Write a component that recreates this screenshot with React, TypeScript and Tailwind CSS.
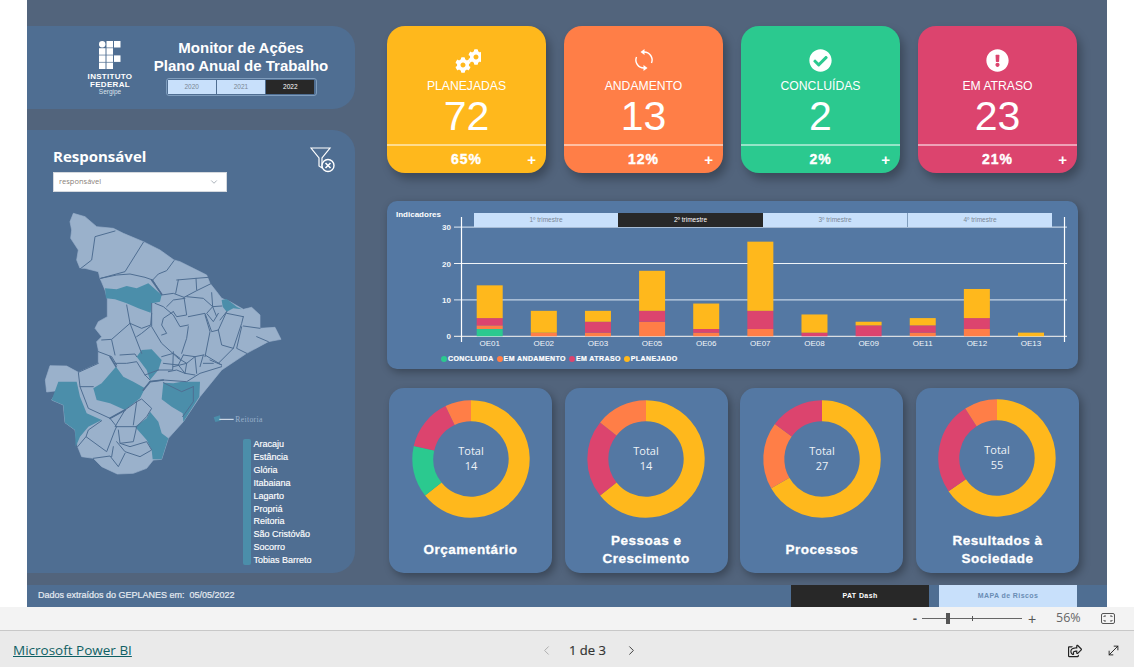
import React from "react";
import { FaCheckCircle, FaCog, FaExclamationCircle, FaRegShareSquare } from "react-icons/fa";
import { ChevronDown, ChevronLeft, ChevronRight, MoveDiagonal } from "lucide-react";

const YELLOW = "#ffb81c";
const ORANGE = "#ff7e47";
const GREEN = "#2bc98f";
const RED = "#dc446e";

const GearsIcon = () => (
  <svg width="28" height="28" viewBox="0 0 28 28" fill="white">
    <FaCog x="2" y="11" width="14" height="14" />
    <FaCog x="15" y="3" width="11" height="11" />
  </svg>
);

const SyncIcon = () => (
  <svg width="24" height="24" viewBox="0 0 24 24" fill="white">
    <path d="M12 4 A8 8 0 0 1 19.5 15" fill="none" stroke="white" strokeWidth="1.4" />
    <path d="M12.5 1 L8.5 4 L12.5 7 Z" />
    <path d="M12 20 A8 8 0 0 1 4.5 9" fill="none" stroke="white" strokeWidth="1.4" />
    <path d="M11.5 17 L15.5 20 L11.5 23 Z" />
  </svg>
);

const kpis = [
  { title: "PLANEJADAS", value: "72", pct: "65%", bg: "bg-[#ffb81c]", icon: <GearsIcon /> },
  { title: "ANDAMENTO", value: "13", pct: "12%", bg: "bg-[#ff7e47]", icon: <SyncIcon /> },
  { title: "CONCLUÍDAS", value: "2", pct: "2%", bg: "bg-[#2bc98f]", icon: <FaCheckCircle size={23} color="white" /> },
  { title: "EM ATRASO", value: "23", pct: "21%", bg: "bg-[#dc446e]", icon: <FaExclamationCircle size={23} color="white" /> },
];

const KpiCard = ({ title, value, pct, bg, icon }: (typeof kpis)[number]) => (
  <div className={`${bg} w-[159px] h-[147px] rounded-[18px] shadow-[4px_6px_10px_rgba(0,0,0,0.28)] flex flex-col items-center text-white`}>
    <div className="h-[28px] mt-[20px] flex items-center justify-center">{icon}</div>
    <div className="text-[12.2px] leading-[15px] mt-[5px]">{title}</div>
    <div className="text-[41px] leading-[42px] mt-[1px]">{value}</div>
    <div className="w-full h-[1.5px] bg-white/50 mt-[7px]" />
    <div className="w-full flex-1 flex items-center justify-center relative">
      <span className="text-[14px] font-bold tracking-[1px] [-webkit-text-stroke:0.4px_white]">{pct}</span>
      <span className="absolute right-[10px] top-[3px] text-[15px] font-bold">+</span>
    </div>
  </div>
);

const bars = [
  { label: "OE01", c: 2, a: 1, e: 2, p: 9 },
  { label: "OE02", c: 0, a: 1, e: 0, p: 6 },
  { label: "OE03", c: 0, a: 1, e: 3, p: 3 },
  { label: "OE05", c: 0, a: 4, e: 3, p: 11 },
  { label: "OE06", c: 0, a: 1, e: 1, p: 7 },
  { label: "OE07", c: 0, a: 2, e: 5, p: 19 },
  { label: "OE08", c: 0, a: 0, e: 1, p: 5 },
  { label: "OE09", c: 0, a: 0, e: 3, p: 1 },
  { label: "OE11", c: 0, a: 1, e: 2, p: 2 },
  { label: "OE12", c: 0, a: 2, e: 3, p: 8 },
  { label: "OE13", c: 0, a: 0, e: 0, p: 1 },
];

// svg starts at x=387, y=215 of the page
const BarChart = () => {
  const y0 = 121.3;
  const unit = 3.64;
  return (
    <svg width="691" height="132" viewBox="0 0 691 132" className="block relative -mt-[12px]" fontFamily="Liberation Sans, sans-serif">
      {[0, 10, 20, 30].map((v) => (
        <g key={v}>
          <line x1="67" x2="680" y1={y0 - v * unit} y2={y0 - v * unit} stroke={v === 20 ? "#f0f4f8" : v === 0 ? "#d9dde2" : "#c3d3e6"} strokeWidth="1.2" />
          <text x="64" y={y0 - v * unit + 3} textAnchor="end" fontSize="8" fontWeight="700" fill="#f2f5f9">{v}</text>
        </g>
      ))}
      <line x1="74.5" x2="74.5" y1="2" y2="127" stroke="white" strokeWidth="1.2" />
      <line x1="677.5" x2="677.5" y1="2" y2="127" stroke="white" strokeWidth="1.2" />
      {bars.map((b, i) => {
        const x = 89.7 + i * 54.13;
        let acc = 0;
        const segs = [
          { v: b.c, f: GREEN },
          { v: b.a, f: ORANGE },
          { v: b.e, f: RED },
          { v: b.p, f: YELLOW },
        ];
        return (
          <g key={b.label}>
            {segs.map((s, j) => {
              const h = s.v * unit;
              acc += h;
              return s.v ? <rect key={j} x={x} y={y0 - acc} width="26" height={h} fill={s.f} /> : null;
            })}
            <text x={x + 13} y="131" textAnchor="middle" fontSize="8" fill="#f2f5f9">{b.label}</text>
          </g>
        );
      })}
    </svg>
  );
};

const legend = [
  { label: "CONCLUIDA", cls: "bg-[#2bc98f]" },
  { label: "EM ANDAMENTO", cls: "bg-[#ff7e47]" },
  { label: "EM ATRASO", cls: "bg-[#dc446e]" },
  { label: "PLANEJADO", cls: "bg-[#ffb81c]" },
];

const Donut = ({ segs, total }: { segs: { v: number; f: string }[]; total: number }) => {
  const r = 48.2;
  const cx = 60;
  const cy = 60;
  const sum = segs.reduce((s, x) => s + x.v, 0);
  let a = 0;
  return (
    <svg width="120" height="120" viewBox="0 0 120 120" className="block">
      {segs.map((s, i) => {
        const a0 = (a / sum) * 2 * Math.PI;
        a += s.v;
        const a1 = (a / sum) * 2 * Math.PI;
        const d = `M${cx + r * Math.sin(a0)} ${cy - r * Math.cos(a0)} A${r} ${r} 0 ${a1 - a0 > Math.PI ? 1 : 0} 1 ${cx + r * Math.sin(a1)} ${cy - r * Math.cos(a1)}`;
        return <path key={i} d={d} fill="none" stroke={s.f} strokeWidth="21" />;
      })}
      <text x="60" y="56" textAnchor="middle" fontSize="11" fill="#eef2f7" fontFamily="Open Sans, sans-serif">Total</text>
      <text x="60" y="71" textAnchor="middle" fontSize="11" fill="#eef2f7" fontFamily="Open Sans, sans-serif">{total}</text>
    </svg>
  );
};

const donuts = [
  { title: ["Orçamentário"], total: 14, top: "pt-[11px]", segs: [{ v: 9, f: YELLOW }, { v: 2, f: GREEN }, { v: 2, f: RED }, { v: 1, f: ORANGE }] },
  { title: ["Pessoas e", "Crescimento"], total: 14, top: "pt-[11px]", segs: [{ v: 9, f: YELLOW }, { v: 3, f: RED }, { v: 2, f: ORANGE }] },
  { title: ["Processos"], total: 27, top: "pt-[11px]", segs: [{ v: 18, f: YELLOW }, { v: 5, f: ORANGE }, { v: 4, f: RED }] },
  { title: ["Resultados à", "Sociedade"], total: 55, top: "pt-[10px]", segs: [{ v: 36, f: YELLOW }, { v: 14, f: RED }, { v: 5, f: ORANGE }] },
];

const cities = ["Aracaju", "Estância", "Glória", "Itabaiana", "Lagarto", "Propriá", "Reitoria", "São Cristóvão", "Socorro", "Tobias Barreto"];

const outline =
  "130,40 165,50 200,80 250,85 280,100 340,125 390,150 432,180 450,185 490,205 530,225 540,250 560,275 575,295 600,305 640,328 665,322 690,345 690,385 735,382 753,418 715,425 650,460 575,510 510,590 460,665 415,715 395,778 370,780 350,805 310,820 262,822 215,800 190,775 155,770 143,740 135,690 105,668 100,615 65,600 82,572 50,576 46,540 60,497 110,498 145,517 205,490 205,450 200,425 215,410 195,385 205,365 232,350 232,297 225,270 210,235 205,215 165,205 150,205 140,180 145,150 122,115 125,90 120,65";

const tealAreas = [
  "225,265 260,268 290,258 320,265 355,250 395,285 390,305 365,310 362,338 325,325 290,310 255,298 228,295",
  "575,300 590,297 620,320 635,328 610,325 590,335 578,320",
  "335,450 365,448 395,480 385,510 360,540 350,510 320,470",
  "258,500 280,530 310,545 345,565 330,595 285,630 240,610 200,600 190,565 215,550",
  "85,545 140,545 150,590 170,640 215,660 175,680 150,710 137,740 135,690 105,668 100,615 65,600",
  "400,548 430,550 455,545 510,545 508,590 460,665 458,640 425,620 395,598",
  "360,635 385,665 395,700 415,715 395,778 368,778 365,750 350,720 315,680 350,655",
];

const borders = [
  "255,93 195,110 185,180 150,207",
  "340,127 285,215 212,235",
  "212,235 260,225 300,222 345,232 368,240 395,283",
  "368,240 385,222 410,212 432,182",
  "395,285 430,280 462,292 500,272 545,250",
  "440,240 498,235 535,232",
  "445,240 437,280",
  "498,235 500,270",
  "545,278 548,320 575,318",
  "462,292 470,345 440,350 430,335",
  "470,290 520,295 548,320 560,350",
  "290,315 300,370 245,418 215,420",
  "300,370 335,460",
  "300,370 335,385 362,375 365,340",
  "365,310 365,380 395,430 445,475",
  "362,378 335,400 320,410",
  "395,405 410,400 395,375 400,355 430,335",
  "375,310 400,320 430,345 450,380 475,375",
  "475,350 525,340 545,395 565,390 590,335",
  "475,380 470,415 455,460",
  "525,345 540,395 525,470",
  "565,390 575,435 610,445 635,370 640,350",
  "590,340 640,350",
  "640,378 690,385",
  "635,380 620,445 650,460",
  "680,410 715,425",
  "610,445 565,490",
  "525,465 575,495",
  "245,420 255,465",
  "205,455 245,470 260,495",
  "270,465 315,462 320,470",
  "255,490 290,490 320,485 345,525 360,540",
  "205,490 145,517 150,560 190,560",
  "395,470 430,460 450,475",
  "400,490 445,495 460,465",
  "430,455 428,510 385,510",
  "470,490 465,520",
  "495,470 500,520",
  "520,465 510,500",
  "360,545 400,540 470,545 510,520 575,500",
  "415,515 440,510 465,520 495,525",
  "340,570 360,545",
  "150,560 175,625 240,655 285,630",
  "260,680 240,655",
  "285,630 255,680 320,680 350,650 365,625 335,597 320,605 310,675",
  "320,605 285,630",
  "215,662 175,690 168,710 230,755 255,690 260,680",
  "168,710 143,740",
  "265,690 270,730 310,725 320,680",
  "260,725 285,755 330,770 365,750 350,725 300,740 270,730",
  "190,775 240,768 265,800 285,760",
  "250,740 245,770",
  "400,548 455,575 490,560",
  "490,560 490,605 458,650",
  "445,475 470,490 495,470 520,465",
  "430,500 470,490",
  "460,465 495,470",
  "465,520 445,495",
  "540,480 575,495",
  "520,490 550,490",
  "345,525 385,510",
  "410,320 430,300 465,295",
  "548,320 530,340 550,365 565,340",
  "590,335 570,360",
];

// the wider seams between the regions
const thickBorders = ["340,570 360,545 400,540", "240,655 285,630", "258,500 240,470", "365,240 395,283"];

const MapSergipe = () => (
  <svg width="330" height="370" viewBox="0 0 990 1110" className="block ml-[3px]">
    <polygon points={outline} fill="#9ab1cb" stroke="#9ab1cb" strokeWidth="2" strokeLinejoin="round" />
    {tealAreas.map((p) => (
      <polygon key={p} points={p} fill="#4b8eaa" />
    ))}
    {borders.map((p) => (
      <polyline key={p} points={p} fill="none" stroke="#4f6e92" strokeWidth="3" strokeLinejoin="round" strokeLinecap="round" />
    ))}
    {thickBorders.map((p) => (
      <polyline key={p} points={p} fill="none" stroke="#4f6e92" strokeWidth="5" strokeLinejoin="round" strokeLinecap="round" />
    ))}
    <polygon points="551,652 570,646 572,662 556,666" fill="#4b8eaa" />
    <line x1="568" x2="611" y1="658" y2="658" stroke="#e6edf5" strokeWidth="3" />
    <text x="616" y="667" fontSize="23" fill="#9ab1cb" letterSpacing="1" fontFamily="Liberation Serif, serif">Reitoria</text>
  </svg>
);

const IfLogo = () => (
  <svg width="22" height="28" viewBox="0 0 22 28" fill="white" className="block">
    <circle cx="3.2" cy="3.2" r="3.2" />
    <rect x="7.5" y="0" width="6.5" height="6.5" />
    <rect x="15" y="0" width="6.5" height="6.5" />
    <rect x="0" y="7.2" width="6.5" height="6.5" />
    <rect x="7.5" y="7.2" width="6.5" height="6.5" />
    <rect x="0" y="14.4" width="6.5" height="6.5" />
    <rect x="7.5" y="14.4" width="6.5" height="6.5" />
    <rect x="15" y="14.4" width="6.5" height="6.5" />
    <rect x="0" y="21.6" width="6.5" height="6.5" />
    <rect x="7.5" y="21.6" width="6.5" height="6.5" />
  </svg>
);

const ClearFilterIcon = () => (
  <svg width="26" height="28" viewBox="0 0 26 28" fill="none" stroke="white" strokeWidth="1.2">
    <path d="M1 2 H20 L12 12 V22 L9 20 V12 Z" />
    <circle cx="18" cy="19.5" r="6" fill="#4f6e92" strokeWidth="1.4" />
    <path d="M15.5 17 L20.5 22 M20.5 17 L15.5 22" strokeWidth="1.6" />
  </svg>
);

const FitIcon = () => (
  <svg width="14" height="11" viewBox="0 0 14 11" fill="none" stroke="#555" strokeWidth="1">
    <rect x="0.5" y="0.5" width="13" height="10" rx="1.5" />
    <path d="M3 4 V3 H5 M9 3 H11 V4 M11 7 V8 H9 M5 8 H3 V7" />
  </svg>
);

export default function App() {
  return (
    <div className="w-[1134px] h-[667px] overflow-hidden bg-white flex flex-col font-['Liberation_Sans',sans-serif]">
      <div className="h-[607px] flex">
        <div className="w-[27px] bg-white" />
        <main className="w-[1080px] bg-[#52647c] flex flex-col">
          <div className="h-[585px] flex pt-[26px]">
            {/* left column */}
            <div className="w-[328px] flex flex-col gap-[21px]">
              <div className="h-[83px] bg-[#4f6e92] rounded-r-[22px] flex">
                <div className="w-[118px] pt-[15px] flex flex-col items-center text-white pl-[48px]">
                  <IfLogo />
                  <div className="text-[8px] leading-[7.5px] font-bold tracking-[0.3px] text-center mt-[4px] whitespace-nowrap">INSTITUTO<br />FEDERAL</div>
                  <div className="text-[6.5px] leading-[8px] text-[#dbe3ec]">Sergipe</div>
                </div>
                <div className="flex-1 pt-[13px] flex flex-col items-center pr-[18px]">
                  <div className="text-white font-bold text-[15px] leading-[18px] text-center whitespace-nowrap">Monitor de Ações<br />Plano Anual de Trabalho</div>
                  <div className="mt-[3px] w-[151px] h-[18px] rounded-[3px] border border-[#7f9dbd] bg-[#4f6e92] flex items-stretch gap-px p-px text-[6.5px]">
                    <div className="flex-1 bg-[#c8e0fb] text-[#7a8794] flex items-center justify-center">2020</div>
                    <div className="flex-1 bg-[#c8e0fb] text-[#7a8794] flex items-center justify-center">2021</div>
                    <div className="flex-1 bg-[#282828] text-white flex items-center justify-center">2022</div>
                  </div>
                </div>
              </div>
              <div className="h-[443px] bg-[#4f6e92] rounded-r-[22px] flex flex-col">
                <div className="flex pl-[26px] pr-[19px] pt-[16px] justify-between items-start h-[70px]">
                  <div>
                    <div className="text-white font-bold text-[15px] leading-[20px] font-['Open_Sans',sans-serif]">Responsável</div>
                    <div className="mt-[6px] w-[174px] h-[20px] bg-white border border-[#d5d9de] flex items-center justify-between pl-[5px] pr-[7px]">
                      <span className="text-[7.5px] text-[#8a7f7a] font-['Open_Sans',sans-serif]">responsável</span>
                      <ChevronDown size={10} color="#9aa3ad" />
                    </div>
                  </div>
                  <ClearFilterIcon />
                </div>
                <div className="relative">
                  <MapSergipe />
                  <div className="absolute left-[216px] top-[239px] flex gap-[3px]">
                    <div className="w-[7.5px] h-[126px] rounded-[2px] bg-[#4b8eaa]" />
                    <div className="text-[9px] leading-[12.9px] -mt-[1px] text-white whitespace-nowrap [-webkit-text-stroke:0.15px_white]">
                      {cities.map((c) => (
                        <div key={c}>{c}</div>
                      ))}
                    </div>
                  </div>
                </div>
              </div>
            </div>
            {/* right column */}
            <div className="flex-1 pl-[32px] flex flex-col">
              <div className="flex gap-[18px]">
                {kpis.map((k) => (
                  <KpiCard key={k.title} {...k} />
                ))}
              </div>
              <div className="mt-[28px] w-[691px] h-[168px] bg-[#5478a3] rounded-[10px] shadow-[2px_3px_8px_rgba(0,0,0,0.3)] pt-[12px]">
                <div className="flex h-[14px] relative z-10">
                  <div className="w-[87px] pl-[9px] text-[8px] leading-[8px] -mt-[2px] font-bold text-white">Indicadores</div>
                  <div className="flex text-[6.5px] w-[578px]">
                    <div className="w-[144px] bg-[#c8e0fb] text-[#7a8794] flex items-center justify-center">1º trimestre</div>
                    <div className="w-[145px] bg-[#282828] text-white flex items-center justify-center">2º trimestre</div>
                    <div className="w-[145px] bg-[#c8e0fb] text-[#7a8794] border-r border-[#7f9dbd] flex items-center justify-center">3º trimestre</div>
                    <div className="w-[144px] bg-[#c8e0fb] text-[#7a8794] flex items-center justify-center">4º trimestre</div>
                  </div>
                </div>
                <BarChart />
                <div className="flex items-center pl-[54px] gap-[3px] mt-[8px] text-[7px] leading-[8px] font-bold text-white [-webkit-text-stroke:0.2px_white] tracking-[0.4px]">
                  {legend.map((l) => (
                    <div key={l.label} className="flex items-center gap-[1px]">
                      <span className={`w-[6px] h-[6px] rounded-full ${l.cls}`} />
                      {l.label}
                    </div>
                  ))}
                </div>
              </div>
              <div className="mt-[19px] ml-[2px] flex gap-[12.67px]">
                {donuts.map((d) => (
                  <div key={d.title[0]} className={`w-[163px] h-[185px] bg-[#5478a3] rounded-[15px] shadow-[3px_4px_9px_rgba(0,0,0,0.3)] flex flex-col items-center ${d.top}`}>
                    <Donut segs={d.segs} total={d.total} />
                    <div className="flex-1 flex items-center justify-center text-center text-white font-bold text-[13.5px] leading-[18px] tracking-[0.5px] [-webkit-text-stroke:0.3px_white] pt-[8px]">
                      <div>
                        {d.title.map((t) => (
                          <div key={t}>{t}</div>
                        ))}
                      </div>
                    </div>
                  </div>
                ))}
              </div>
            </div>
          </div>
          <div className="h-[22px] bg-[#4f6e92] flex items-center">
            <div className="pl-[11px] w-[764px] text-[9px] text-[#e6ebf1] [-webkit-text-stroke:0.2px_#e6ebf1]">Dados extraídos do GEPLANES em:&nbsp; 05/05/2022</div>
            <div className="w-[138px] h-full bg-[#282828] text-white text-[7px] font-bold tracking-[0.4px] flex items-center justify-center">PAT Dash</div>
            <div className="w-[138px] h-full ml-[10px] bg-[#c8e0fb] text-[#6a8db5] text-[7px] font-bold tracking-[0.4px] flex items-center justify-center">MAPA de Riscos</div>
          </div>
        </main>
        <div className="w-[27px] bg-white" />
      </div>
      <div className="h-[24px] bg-[#f3f3f3] border-b border-[#c8c8c8] flex items-center justify-end text-[#555] pr-[19px]">
        <span className="text-[13px] font-bold leading-none mr-[5px]">-</span>
        <div className="relative w-[100px] h-[1.5px] bg-[#666] mr-[6px]">
          <div className="absolute left-[24px] -top-[5px] w-[4px] h-[11px] bg-[#555]" />
          <div className="absolute left-[50px] -top-[2px] w-px h-[5px] bg-[#555]" />
        </div>
        <span className="text-[14px] leading-none w-[10px]">+</span>
        <span className="text-[12.5px] ml-[18px] w-[35px] font-['Open_Sans',sans-serif] text-[#666]">56%</span>
        <div className="ml-[10px] flex"><FitIcon /></div>
      </div>
      <div className="flex-1 bg-[#eaeaea] flex items-center relative px-[13px] pt-[3px]">
        <a href="#" className="text-[13.5px] underline text-[#0f5f64] font-['Open_Sans',sans-serif]">Microsoft Power BI</a>
        <div className="absolute left-[539px] flex items-center text-[#333]">
          <ChevronLeft size={15} color="#aaa" strokeWidth={1.5} />
          <span className="text-[13px] font-['Open_Sans',sans-serif] ml-[15px] mr-[18px] [-webkit-text-stroke:0.2px_#333]">1 de 3</span>
          <ChevronRight size={15} color="#333" strokeWidth={1.5} />
        </div>
        <div className="ml-auto flex items-center gap-[24px]">
          <FaRegShareSquare size={14} color="#222" />
          <MoveDiagonal size={15} color="#222" strokeWidth={1.5} />
        </div>
      </div>
    </div>
  );
}
